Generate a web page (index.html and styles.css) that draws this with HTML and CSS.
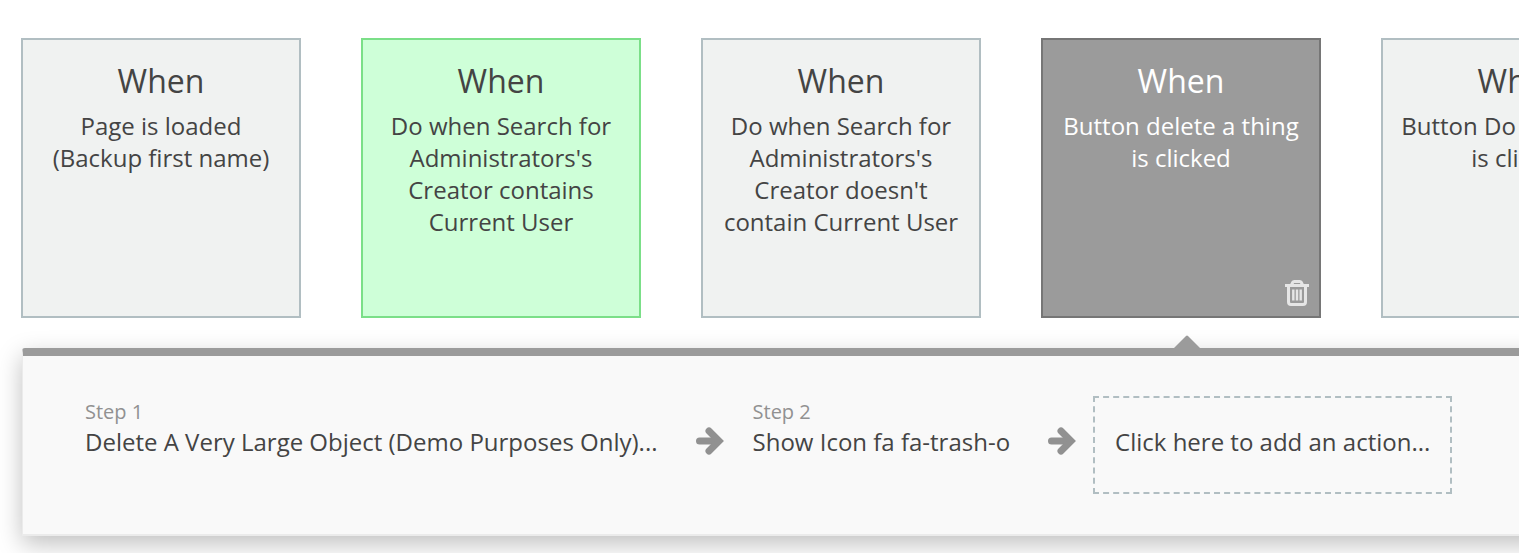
FILE: index.html
```html
<!DOCTYPE html>
<html lang="en">
<head>
<meta charset="utf-8">
<title>Workflow</title>
<link rel="stylesheet" href="styles.css">
</head>
<body>
<main class="workflow">
  <section class="events" aria-label="Events">
    <article class="event">
      <h2 class="event-title">When</h2>
      <p class="event-text">Page is loaded (Backup first name)</p>
    </article>
    <article class="event event-green">
      <h2 class="event-title">When</h2>
      <p class="event-text">Do when Search for Administrators's Creator contains Current User</p>
    </article>
    <article class="event">
      <h2 class="event-title">When</h2>
      <p class="event-text">Do when Search for Administrators's Creator doesn't contain Current User</p>
    </article>
    <article class="event event-selected">
      <h2 class="event-title">When</h2>
      <p class="event-text">Button delete a thing is clicked</p>
      <button class="delete" type="button" aria-label="Delete event">
        <svg width="24" height="28" viewBox="0 0 24 28" fill="none" stroke="currentColor" stroke-width="3">
          <path d="M0 6.5H24"/>
          <path d="M6.500 6L7.800 3.200Q8.200 2.400 9.200 2.400H14.800Q15.800 2.400 16.200 3.200L17.500 6"/>
          <path d="M3.500 7V23Q3.500 25.500 6 25.500H18Q20.500 25.500 20.500 23V7"/>
          <path d="M8.300 10.500V21.500M12 10.500V21.500M15.700 10.500V21.500" stroke-width="2.400"/>
        </svg>
      </button>
    </article>
    <article class="event">
      <h2 class="event-title">When</h2>
      <p class="event-text">Button Do something is clicked</p>
    </article>
  </section>

  <section class="actions" aria-label="Actions">
    <svg class="pointer" width="26" height="13" viewBox="0 0 26 13"><path d="M0 13L12 1Q13 0 14 1L26 13Z" fill="currentColor"/></svg>
    <div class="step">
      <span class="step-label">Step 1</span>
      <span class="step-name">Delete A Very Large Object (Demo Purposes Only)...</span>
    </div>
    <svg class="arrow" width="28" height="28" viewBox="0 0 28 28" fill="none" stroke="currentColor" stroke-width="7" stroke-linecap="round"><path d="M3.500 14H21"/><path d="M13 4L23 14L13 24"/></svg>
    <div class="step">
      <span class="step-label">Step 2</span>
      <span class="step-name">Show Icon fa fa-trash-o</span>
    </div>
    <svg class="arrow" width="28" height="28" viewBox="0 0 28 28" fill="none" stroke="currentColor" stroke-width="7" stroke-linecap="round"><path d="M3.500 14H21"/><path d="M13 4L23 14L13 24"/></svg>
    <button class="add" type="button">Click here to add an action...</button>
  </section>
</main>
</body>
</html>
```
FILE: styles.css
```css
* {
  box-sizing: border-box;
}

body {
  margin: 0;
  overflow: hidden;
  background: #fff;
  color: #444;
  font-family: "Open Sans", "Noto Sans", sans-serif;
  font-size: 24px;
  line-height: 32px;
}

.workflow {
  padding: 38px 0 18px 21px;
}

.events {
  display: flex;
  gap: 60px;
}

.event {
  position: relative;
  flex: none;
  width: 280px;
  height: 280px;
  padding: 18px;
  border: 2px solid #b1bec2;
  background: #f0f2f1;
  text-align: center;
}

.event-green {
  border-color: #7bdf88;
  background: #ceffd8;
}

.event-selected {
  border-color: #767676;
  background: #9b9b9b;
  color: #fff;
}

.event-title {
  margin: 0 0 6px;
  font-size: 32px;
  font-weight: 400;
  line-height: 46px;
}

.event-text {
  margin: 0;
}

.delete {
  position: absolute;
  right: 10px;
  bottom: 9px;
  padding: 0;
  border: 0;
  background: none;
  color: #e6e6e6;
  line-height: 0;
}

.actions {
  position: relative;
  display: flex;
  margin: 30px -60px 0 1px;
  padding: 40px 62px;
  border: 1px solid #ebebeb;
  border-top: 8px solid #9b9b9b;
  border-bottom-width: 2px;
  border-radius: 3px 0 0 0;
  background: #f9f9f9;
  box-shadow: 0 8px 24px rgba(0, 0, 0, 0.25);
}

.pointer {
  position: absolute;
  left: 1151px;
  bottom: 100%;
  margin-bottom: 8px;
  color: #9b9b9b;
}

.step {
  display: flex;
  flex: none;
  flex-direction: column;
}

.step-label {
  color: #919191;
  font-size: 20px;
}

.step-name {
  line-height: 28px;
  white-space: nowrap;
}

.arrow {
  flex: none;
  margin: 31px 29px 0 38px;
  color: #919191;
}

.arrow:last-of-type {
  margin-right: 17px;
}

.add {
  flex: none;
  height: 98px;
  padding: 0 20px 6px;
  border: 2px dashed #b1bec2;
  background: none;
  color: inherit;
  font: inherit;
  white-space: nowrap;
}
```
